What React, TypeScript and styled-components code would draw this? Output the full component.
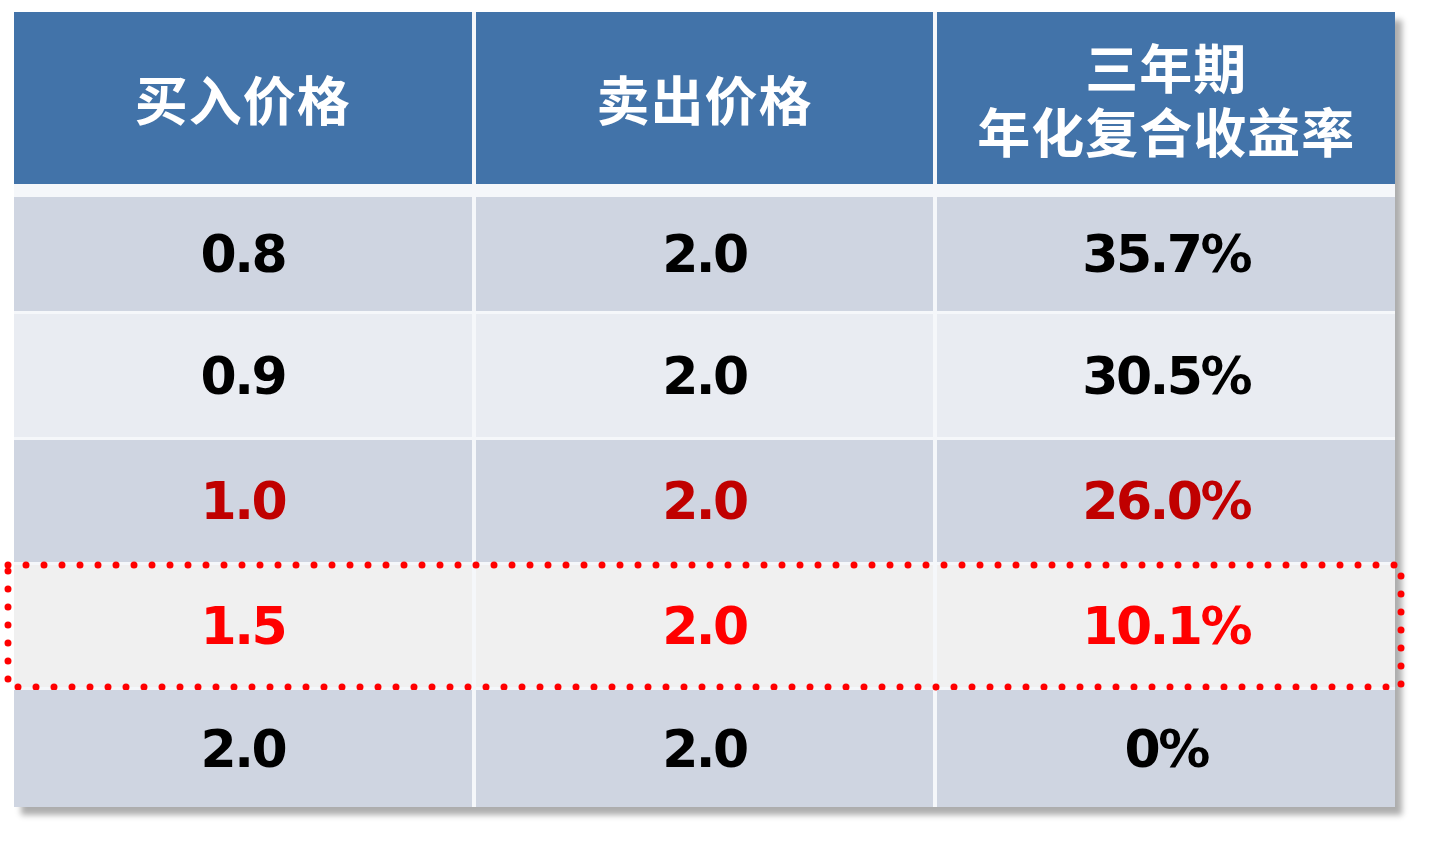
import React from 'react'
import styled, { createGlobalStyle } from 'styled-components'

const GlobalStyle = createGlobalStyle`
  html, body {
    margin: 0;
    padding: 0;
    background: #ffffff;
  }
`

const Page = styled.div`
  width: 1439px;
  height: 841px;
  padding: 12px 0 0 14px;
  box-sizing: border-box;
  background: #ffffff;
`

const Table = styled.div`
  width: 1381px;
  display: flex;
  flex-direction: column;
  gap: 3px;
  background: #f5f7fa;
  box-shadow: 7px 8px 6px rgba(0, 0, 0, 0.32);
`

const Row = styled.div<{ $height: number }>`
  position: relative;
  display: grid;
  grid-template-columns: repeat(3, 1fr);
  column-gap: 4px;
  height: ${p => p.$height}px;
`

const HeadRow = styled(Row)`
  margin-bottom: 10px;
`

const HeadCell = styled.div`
  display: flex;
  flex-direction: column;
  align-items: center;
  justify-content: center;
  background: #4273a9;
  color: #ffffff;
  font-family: 'Noto Sans CJK SC', 'Noto Sans', sans-serif;
  font-weight: 700;
  font-size: 53px;
  line-height: 64px;
  letter-spacing: 1px;
`

const HeadLine = styled.div`
  height: 64px;
`

const Cell = styled.div<{ $bg: string; $color: string }>`
  display: flex;
  align-items: center;
  justify-content: center;
  background: ${p => p.$bg};
  color: ${p => p.$color};
  font-family: 'DejaVu Sans', Verdana, sans-serif;
  font-weight: 700;
  font-size: 52px;
  letter-spacing: -2.5px;
`

const Marker = styled.svg`
  position: absolute;
  left: -6px;
  top: 0;
  width: calc(100% + 12px);
  height: 100%;
  overflow: visible;
  pointer-events: none;
`

type Line = {
  values: string[]
  height: number
  bg: string
  color: string
  marked?: boolean
}

const rows: Line[] = [
  { values: ['0.8', '2.0', '35.7%'], height: 114, bg: '#cfd5e1', color: '#000000' },
  { values: ['0.9', '2.0', '30.5%'], height: 123, bg: '#e9ecf2', color: '#000000' },
  { values: ['1.0', '2.0', '26.0%'], height: 122, bg: '#cfd5e1', color: '#c00000' },
  { values: ['1.5', '2.0', '10.1%'], height: 122, bg: '#f0f0f0', color: '#ff0000', marked: true },
  { values: ['2.0', '2.0', '0%'], height: 117, bg: '#cfd5e1', color: '#000000' }
]

const App = () => {
  return (
    <Page>
      <GlobalStyle />
      <Table>
        <HeadRow $height={172}>
          <HeadCell>买入价格</HeadCell>
          <HeadCell>卖出价格</HeadCell>
          <HeadCell>
            <HeadLine>三年期</HeadLine>
            <HeadLine>年化复合收益率</HeadLine>
          </HeadCell>
        </HeadRow>
        {rows.map((r, i) => (
          <Row key={i} $height={r.height}>
            {r.values.map((v, j) => (
              <Cell key={j} $bg={r.bg} $color={r.color}>
                {v}
              </Cell>
            ))}
            {r.marked && (
              <Marker>
                <rect
                  x="0"
                  y="0"
                  width="100%"
                  height="100%"
                  fill="none"
                  stroke="#ff0000"
                  strokeWidth="7"
                  strokeLinecap="round"
                  strokeDasharray="0 18"
                />
              </Marker>
            )}
          </Row>
        ))}
      </Table>
    </Page>
  )
}

export default App
